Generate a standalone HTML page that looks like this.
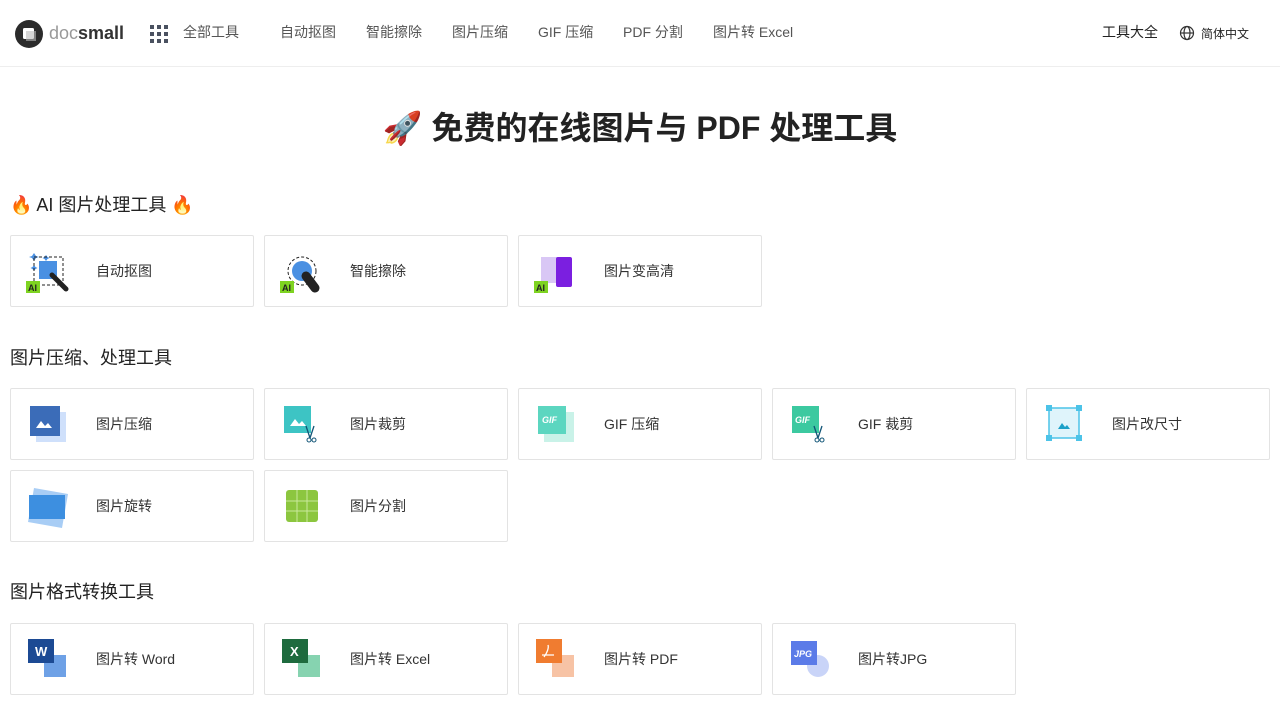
<!DOCTYPE html><html><head><meta charset="utf-8"><style>
*{box-sizing:border-box;margin:0;padding:0}
body{width:1280px;height:720px;overflow:hidden;background:#fff;font-family:"Liberation Sans","Noto Sans CJK SC",sans-serif;color:#222}
.hd{height:67px;border-bottom:1px solid #eee;position:relative}
.hd span{position:absolute;top:22px;font-size:14px;color:#555}
h1{position:absolute;top:103px;width:100%;text-align:center;font-size:32px;font-weight:bold;color:#222}
h2{position:absolute;left:10px;font-size:18px;font-weight:normal;color:#222}
.c{position:absolute;width:244px;height:72px;border:1px solid #e3e3e3;border-radius:2px}
.c svg{position:absolute;left:15px;top:15px}
.c b{position:absolute;left:85px;top:25px;font-weight:normal;font-size:14px;color:#333}
</style></head><body>
<div class="hd">
<svg style="position:absolute;left:15px;top:20px" width="28" height="28"><circle cx="14" cy="14" r="14" fill="#2b2b2b"/><rect x="8" y="8" width="11" height="11" rx="1.5" fill="#fff"/><rect x="11" y="11" width="10" height="10" fill="#bbb" opacity=".6"/></svg>
<span style="left:49px;top:23px;font-size:18px;color:#999">doc<b style="color:#333">small</b></span>
<svg style="position:absolute;left:150px;top:25px" width="18" height="18" fill="#4a5160"><rect x="0" y="0" width="4" height="4"/><rect x="7" y="0" width="4" height="4"/><rect x="14" y="0" width="4" height="4"/><rect x="0" y="7" width="4" height="4"/><rect x="7" y="7" width="4" height="4"/><rect x="14" y="7" width="4" height="4"/><rect x="0" y="14" width="4" height="4"/><rect x="7" y="14" width="4" height="4"/><rect x="14" y="14" width="4" height="4"/></svg>
<span style="left:183px">全部工具</span><span style="left:280px">自动抠图</span><span style="left:366px">智能擦除</span><span style="left:452px">图片压缩</span><span style="left:538px">GIF 压缩</span><span style="left:623px">PDF 分割</span><span style="left:713px">图片转 Excel</span>
<span style="left:1102px;color:#222">工具大全</span>
<svg style="position:absolute;left:1179px;top:25px" width="16" height="16" fill="none" stroke="#333" stroke-width="1.2"><circle cx="8" cy="8" r="6.5"/><ellipse cx="8" cy="8" rx="3" ry="6.5"/><path d="M1.5 8h13"/></svg>
<span style="left:1201px;top:25px;font-size:12px;color:#222">简体中文</span>
</div>
<h1>🚀 免费的在线图片与 PDF 处理工具</h1>
<h2 style="top:191px">🔥 AI 图片处理工具 🔥</h2>
<div class="c" style="left:10px;top:235px"><svg width="45" height="45"><path d="M8 2l2 3 3 1-3 1-2 3-2-3-3-1 3-1z M20 4l1.5 2 2 1-2 1-1.5 2-1.5-2-2-1 2-1z M8 14l1.5 2 2 1-2 1-1.5 2-1.5-2-2-1 2-1z" fill="#4a90e2"/><rect x="8" y="6" width="29" height="28" fill="none" stroke="#222" stroke-dasharray="3 2"/><rect x="13" y="10" width="18" height="18" fill="#4a90e2"/><path d="M26 24l14 14" stroke="#222" stroke-width="5" stroke-linecap="round"/><rect x="0" y="30" width="14" height="12" fill="#7ed321"/><text x="2" y="40" font-size="9" font-weight="bold" fill="#222">AI</text></svg><b>自动抠图</b></div>
<div class="c" style="left:264px;top:235px"><svg width="45" height="45"><circle cx="22" cy="20" r="14" fill="none" stroke="#222" stroke-dasharray="3 2"/><circle cx="22" cy="20" r="10" fill="#4a90e2"/><path d="M26 25l9 12" stroke="#222" stroke-width="9" stroke-linecap="round"/><rect x="0" y="30" width="14" height="12" fill="#7ed321"/><text x="2" y="40" font-size="9" font-weight="bold" fill="#222">AI</text></svg><b>智能擦除</b></div>
<div class="c" style="left:518px;top:235px"><svg width="45" height="45"><rect x="7" y="6" width="16" height="26" fill="#d9c7f5"/><rect x="22" y="6" width="16" height="30" rx="2" fill="#7b1fe0"/><rect x="0" y="30" width="14" height="12" fill="#7ed321"/><text x="2" y="40" font-size="9" font-weight="bold" fill="#222">AI</text></svg><b>图片变高清</b></div>
<h2 style="top:344px">图片压缩、处理工具</h2>
<div class="c" style="left:10px;top:388px"><svg width="45" height="45"><rect x="10" y="8" width="30" height="30" fill="#cfe0fb"/><rect x="4" y="2" width="30" height="30" fill="#3b6cb8"/><path d="M10 24l5-7 4 5 3-3 4 5z" fill="#fff"/></svg><b>图片压缩</b></div>
<div class="c" style="left:264px;top:388px"><svg width="45" height="45"><rect x="4" y="2" width="27" height="27" fill="#3dc4c4"/><path d="M10 22l5-7 4 5 3-3 4 5z" fill="#fff"/><path d="M26 22l4 12M34 22l-4 12" stroke="#157" stroke-width="1.3"/><circle cx="29" cy="36" r="2" fill="none" stroke="#157"/><circle cx="34" cy="36" r="2" fill="none" stroke="#157"/></svg><b>图片裁剪</b></div>
<div class="c" style="left:518px;top:388px"><svg width="45" height="45"><rect x="10" y="8" width="30" height="30" fill="#c9f2e8"/><rect x="4" y="2" width="28" height="28" fill="#5cd6c0"/><text x="8" y="19" font-size="9" font-style="italic" font-weight="bold" fill="#fff">GIF</text></svg><b>GIF 压缩</b></div>
<div class="c" style="left:772px;top:388px"><svg width="45" height="45"><rect x="4" y="2" width="27" height="27" fill="#3cc9a0"/><text x="7" y="19" font-size="9" font-style="italic" font-weight="bold" fill="#fff">GIF</text><path d="M26 22l4 12M34 22l-4 12" stroke="#157" stroke-width="1.3"/><circle cx="29" cy="36" r="2" fill="none" stroke="#157"/><circle cx="34" cy="36" r="2" fill="none" stroke="#157"/></svg><b>GIF 裁剪</b></div>
<div class="c" style="left:1026px;top:388px"><svg width="45" height="45"><rect x="7" y="4" width="30" height="30" fill="#dff4fb" stroke="#4cc3e8" stroke-width="1.5"/><rect x="4" y="1" width="6" height="6" fill="#4cc3e8"/><rect x="34" y="1" width="6" height="6" fill="#4cc3e8"/><rect x="4" y="31" width="6" height="6" fill="#4cc3e8"/><rect x="34" y="31" width="6" height="6" fill="#4cc3e8"/><path d="M16 25l4-6 3 4 2-2 3 4z" fill="#1aa0c8"/></svg><b>图片改尺寸</b></div>
<div class="c" style="left:10px;top:470px"><svg width="45" height="45"><path d="M8 2l34 6-6 34-34-6z" fill="#a8cdf5"/><rect x="3" y="9" width="36" height="24" fill="#3d8fe0"/></svg><b>图片旋转</b></div>
<div class="c" style="left:264px;top:470px"><svg width="45" height="45"><rect x="6" y="4" width="32" height="32" rx="3" fill="#8cc63f"/><path d="M17 4v32M27 4v32M6 15h32M6 25h32" stroke="#c9e89b"/></svg><b>图片分割</b></div>
<h2 style="top:578px">图片格式转换工具</h2>
<div class="c" style="left:10px;top:623px"><svg width="45" height="45"><rect x="18" y="16" width="22" height="22" fill="#6ea1e6"/><rect x="2" y="0" width="26" height="24" fill="#1c4a94"/><text x="9" y="17" font-size="13" font-weight="bold" fill="#fff">W</text></svg><b>图片转 Word</b></div>
<div class="c" style="left:264px;top:623px"><svg width="45" height="45"><rect x="18" y="16" width="22" height="22" fill="#86d3b0"/><rect x="2" y="0" width="26" height="24" fill="#1e6b3e"/><text x="10" y="17" font-size="13" font-weight="bold" fill="#fff">X</text></svg><b>图片转 Excel</b></div>
<div class="c" style="left:518px;top:623px"><svg width="45" height="45"><rect x="18" y="16" width="22" height="22" fill="#f7c3a5"/><rect x="2" y="0" width="26" height="24" fill="#f07c30"/><path d="M10 18c3-4 5-9 4-12M8 16h12" stroke="#fff" fill="none" stroke-width="1.3"/></svg><b>图片转 PDF</b></div>
<div class="c" style="left:772px;top:623px"><svg width="45" height="45"><circle cx="30" cy="27" r="11" fill="#c9d4f8"/><rect x="3" y="2" width="26" height="24" fill="#5b7be8"/><text x="6" y="18" font-size="9" font-style="italic" font-weight="bold" fill="#fff">JPG</text></svg><b>图片转JPG</b></div>
</body></html>
